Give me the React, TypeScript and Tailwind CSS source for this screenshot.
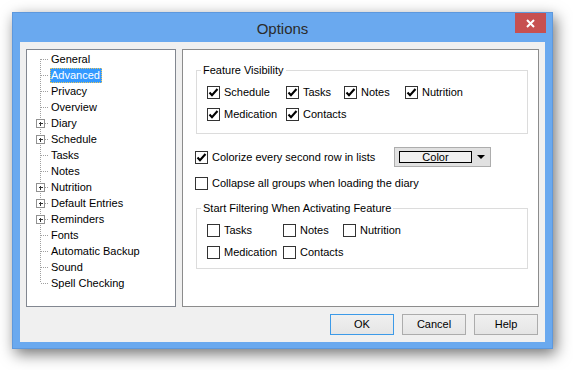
import React from "react";

const FONT = { fontFamily: '"Liberation Sans", Arial, sans-serif' };

function Check({ checked }: { checked: boolean }) {
  return (
    <span className="w-[13px] h-[13px] border border-[#333333] bg-white flex items-center justify-center shrink-0">
      {checked && (
        <svg width="11" height="11" viewBox="0 0 11 11">
          <path d="M1.5 5.5 L4 8.2 L9.5 2" fill="none" stroke="#000" strokeWidth="2.1" />
        </svg>
      )}
    </span>
  );
}

function CB({ label, checked, w }: { label: string; checked: boolean; w?: string }) {
  return (
    <div className={`flex items-center gap-[4px] h-[16px] ${w ?? ""}`}>
      <Check checked={checked} />
      <span className="text-[11px] leading-[13px] text-black whitespace-nowrap">{label}</span>
    </div>
  );
}

const treeItems: { label: string; plus?: boolean }[] = [
  { label: "General" },
  { label: "Advanced" },
  { label: "Privacy" },
  { label: "Overview" },
  { label: "Diary", plus: true },
  { label: "Schedule", plus: true },
  { label: "Tasks" },
  { label: "Notes" },
  { label: "Nutrition", plus: true },
  { label: "Default Entries", plus: true },
  { label: "Reminders", plus: true },
  { label: "Fonts" },
  { label: "Automatic Backup" },
  { label: "Sound" },
  { label: "Spell Checking" },
];

function Gutter({ first, last, plus }: { first: boolean; last: boolean; plus?: boolean }) {
  return (
    <svg width="22" height="16" viewBox="0 0 22 16" className="shrink-0" shapeRendering="crispEdges">
      <line x1="12.5" y1={first ? 8 : 0} x2="12.5" y2={last ? 8 : 16} stroke="#a0a0a0" strokeDasharray="1 1" />
      <line x1="13" y1="8.5" x2="21" y2="8.5" stroke="#a0a0a0" strokeDasharray="1 1" />
      {plus && (
        <g>
          <rect x="8.5" y="4.5" width="8" height="8" fill="#fff" stroke="#919191" />
          <line x1="10.5" y1="8.5" x2="14.5" y2="8.5" stroke="#333" />
          <line x1="12.5" y1="6.5" x2="12.5" y2="10.5" stroke="#333" />
        </g>
      )}
    </svg>
  );
}

function Fieldset({ legend, children, cls }: { legend: string; children: React.ReactNode; cls: string }) {
  return (
    <fieldset className={`border border-[#dcdcdc] w-[332px] ${cls}`}>
      <legend className="-ml-[6px] px-[2px] text-[11px] leading-[14px] text-black">{legend}</legend>
      {children}
    </fieldset>
  );
}

function Btn({ label, def }: { label: string; def?: boolean }) {
  return (
    <div
      className={`w-[64px] h-[21px] flex items-center justify-center text-[11px] text-black bg-gradient-to-b from-[#f0f0f0] to-[#e5e5e5] border ${
        def ? "border-[#3c9ae8]" : "border-[#acacac]"
      }`}
    >
      {label}
    </div>
  );
}

export default function App() {
  return (
    <div className="w-[573px] h-[370px] bg-white overflow-hidden pt-[12px] pl-[12px]" style={FONT}>
      <div className="w-[541px] h-[337px] flex flex-col bg-[#6aa9ef] border border-[#5d98dd] shadow-[3px_5px_14px_rgba(0,0,0,0.55)]">
        {/* title bar */}
        <div className="relative h-[29px] flex items-center justify-center">
          <span className="text-[15px] text-[#2b2b2b] leading-none mt-[2px]">Options</span>
          <div className="absolute right-[6px] top-0 w-[31px] h-[20px] bg-[#c75050] flex items-center justify-center">
            <svg width="9" height="9" viewBox="0 0 9 9">
              <path d="M1 1 L8 8 M8 1 L1 8" stroke="#fff" strokeWidth="2" />
            </svg>
          </div>
        </div>
        {/* client */}
        <div className="mx-[7px] h-[300px] bg-[#f0f0f0] flex flex-col pt-[7px] pl-[6px] pr-[6px]">
          <div className="flex gap-[6px] h-[258px]">
            {/* tree */}
            <div className="w-[150px] h-full bg-white border border-[#828790] pt-[1px] pl-[1px]">
              {treeItems.map((it, i) => (
                <div key={it.label} className="flex items-center h-[16px]">
                  <Gutter first={i === 0} last={i === treeItems.length - 1} plus={it.plus} />
                  {it.label === "Advanced" ? (
                    <span className="h-[15px] leading-[13px] text-[11px] text-white bg-[#3399ff] border border-dotted border-[#e8c65e] pr-[1px]">
                      {it.label}
                    </span>
                  ) : (
                    <span className="h-[15px] leading-[13px] text-[11px] text-black border border-transparent">
                      {it.label}
                    </span>
                  )}
                </div>
              ))}
            </div>
            {/* right panel */}
            <div className="w-[357px] h-full bg-white border border-[#8c8c8c] pl-[13px] pt-[13px]">
              <Fieldset legend="Feature Visibility" cls="h-[71px] pl-[10px] pt-[7px]">
                <div className="flex flex-col gap-[6px]">
                  <div className="flex">
                    <CB label="Schedule" checked w="w-[79px]" />
                    <CB label="Tasks" checked w="w-[58px]" />
                    <CB label="Notes" checked w="w-[61px]" />
                    <CB label="Nutrition" checked />
                  </div>
                  <div className="flex">
                    <CB label="Medication" checked w="w-[79px]" />
                    <CB label="Contacts" checked />
                  </div>
                </div>
              </Fieldset>
              <div className="flex items-center mt-[13px] -ml-[1px] h-[20px]">
                <div className="w-[199px]">
                  <CB label="Colorize every second row in lists" checked />
                </div>
                <div className="w-[97px] h-[20px] bg-[#e1e1e1] border border-[#adadad] flex items-center pl-[4px]">
                  <div className="w-[73px] h-[12px] border border-black bg-[#f0f0f0] flex items-center justify-center text-[11px] leading-none text-black">
                    Color
                  </div>
                  <svg width="18" height="8" viewBox="0 0 18 8">
                    <path d="M5 2 L13 2 L9 6 Z" fill="#000" />
                  </svg>
                </div>
              </div>
              <div className="mt-[8px] -ml-[1px]">
                <CB label="Collapse all groups when loading the diary" checked={false} />
              </div>
              <Fieldset legend="Start Filtering When Activating Feature" cls="mt-[10px] h-[68px] pl-[10px] pt-[7px]">
                <div className="flex flex-col gap-[6px]">
                  <div className="flex">
                    <CB label="Tasks" checked={false} w="w-[76px]" />
                    <CB label="Notes" checked={false} w="w-[60px]" />
                    <CB label="Nutrition" checked={false} />
                  </div>
                  <div className="flex">
                    <CB label="Medication" checked={false} w="w-[76px]" />
                    <CB label="Contacts" checked={false} />
                  </div>
                </div>
              </Fieldset>
            </div>
          </div>
          {/* buttons */}
          <div className="flex justify-end gap-[8px] mt-[7px] pr-[1px]">
            <Btn label="OK" def />
            <Btn label="Cancel" />
            <Btn label="Help" />
          </div>
        </div>
      </div>
    </div>
  );
}
